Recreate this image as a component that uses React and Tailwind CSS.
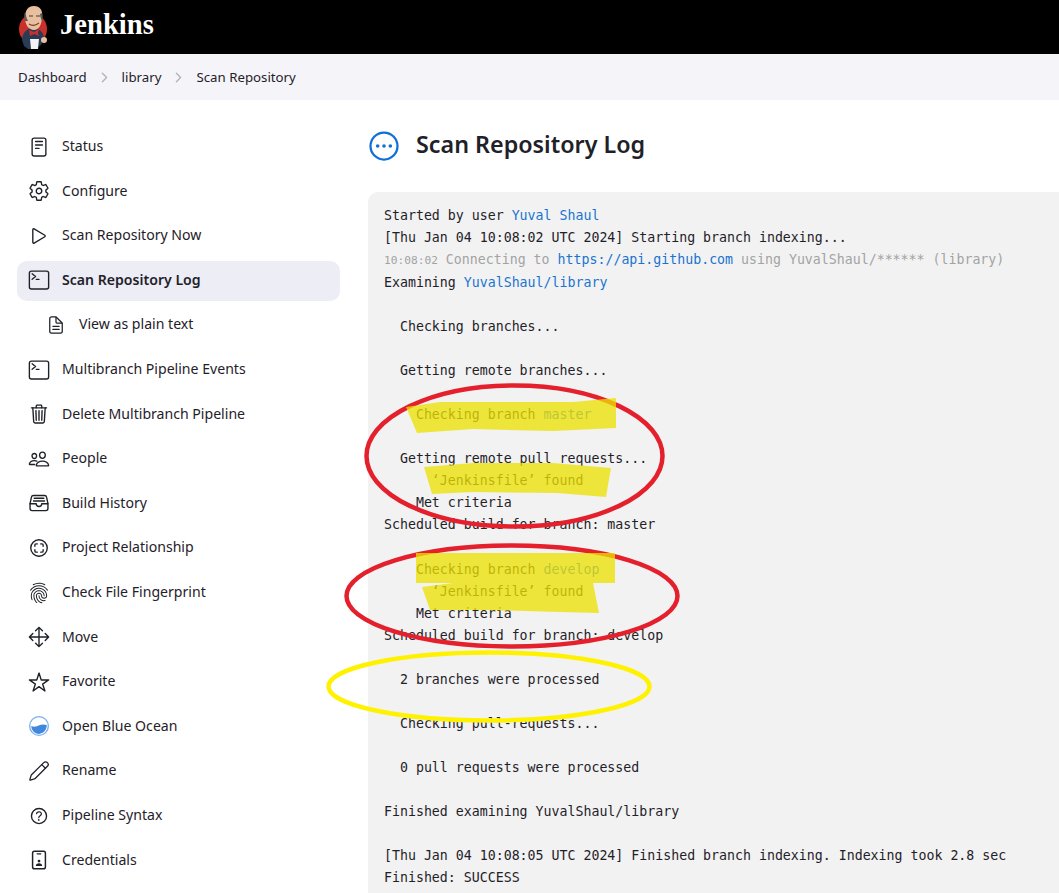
import React from 'react';
import {
  IoReaderOutline,
  IoSettingsOutline,
  IoPlayOutline,
  IoTerminalOutline,
  IoDocumentTextOutline,
  IoTrashOutline,
  IoPeopleOutline,
  IoFileTrayFullOutline,
  IoScanCircleOutline,
  IoFingerPrintOutline,
  IoMoveOutline,
  IoStarOutline,
  IoHelpCircleOutline,
  IoEllipsisHorizontalCircleOutline,
  IoChevronForward,
} from 'react-icons/io5';
import { Pencil } from 'lucide-react';

function JenkinsLogo() {
  return (
    <svg width="32" height="46" viewBox="0 0 32 46">
      <ellipse cx="15" cy="25" rx="14" ry="15" fill="#c9302c" />
      <path d="M4 36c0-7 5-12 11-12s11 4 11 11l-3 6-6 4h-7l-4-3z" fill="#2a3b55" />
      <path d="M7 14c0-8 3-12 9-12s9 4 8 11c0 7-3 13-8 13s-9-5-9-12z" fill="#e8c0a0" />
      <path d="M7 17c-1-4-1-6 0-9 1 2 1 6 3 9zM24 9c1 3 1 5 0 8-1-2-2-5-2-7z" fill="#5a5a5a" />
      <path d="M11 20c3 2 6 2 10-1" stroke="#7a3b2a" strokeWidth="1.2" fill="none" />
      <path d="M11 12h4M18 12h4" stroke="#3a3a3a" strokeWidth="1.2" />
      <path d="M11 26l5 2 5-3-1 4 1 3-5-2-4 2z" fill="#c9302c" />
      <path d="M12 35h9l-1 10h-7z" fill="#f4f4f4" />
      <circle cx="26" cy="36" r="3" fill="#e8c0a0" />
    </svg>
  );
}

function CredentialsIcon() {
  return (
    <svg width="24" height="24" viewBox="0 0 24 24" fill="none" stroke="currentColor">
      <rect x="5" y="2.5" width="14" height="19" rx="2" strokeWidth="1.6" />
      <path d="M10 5.2h4" strokeWidth="1.4" strokeLinecap="round" />
      <circle cx="12" cy="13.2" r="1.5" fill="currentColor" stroke="none" />
      <path d="M8.5 18.5c0-2 1.5-3 3.5-3s3.5 1 3.5 3z" fill="currentColor" stroke="none" />
    </svg>
  );
}

function BlueOceanIcon() {
  return (
    <svg width="24" height="24" viewBox="0 0 24 24">
      <circle cx="12" cy="12" r="10.2" fill="#fff" stroke="#7db1ea" strokeWidth="1.5" />
      <path d="M3.6 12c3 1.2 5 .8 8-.6 3-1.3 5.800-1.600 8.800-.4.300 5-3.500 9.600-8.400 9.600-4.800 0-8.400-4-8.400-8.600z" fill="#3f88dd" />
    </svg>
  );
}

const items = [
  { label: 'Status', icon: <IoReaderOutline size={24} /> },
  { label: 'Configure', icon: <IoSettingsOutline size={24} /> },
  { label: 'Scan Repository Now', icon: <IoPlayOutline size={24} /> },
  { label: 'Scan Repository Log', icon: <IoTerminalOutline size={24} />, active: true },
  { label: 'View as plain text', icon: <IoDocumentTextOutline size={20} />, sub: true },
  { label: 'Multibranch Pipeline Events', icon: <IoTerminalOutline size={24} /> },
  { label: 'Delete Multibranch Pipeline', icon: <IoTrashOutline size={24} /> },
  { label: 'People', icon: <IoPeopleOutline size={24} /> },
  { label: 'Build History', icon: <IoFileTrayFullOutline size={24} /> },
  { label: 'Project Relationship', icon: <IoScanCircleOutline size={24} /> },
  { label: 'Check File Fingerprint', icon: <IoFingerPrintOutline size={24} /> },
  { label: 'Move', icon: <IoMoveOutline size={24} /> },
  { label: 'Favorite', icon: <IoStarOutline size={24} /> },
  { label: 'Open Blue Ocean', icon: <BlueOceanIcon /> },
  { label: 'Rename', icon: <Pencil size={22} strokeWidth={1.4} /> },
  { label: 'Pipeline Syntax', icon: <IoHelpCircleOutline size={24} /> },
  { label: 'Credentials', icon: <CredentialsIcon /> },
];

const A = ({ children }) => <span className="text-[#1a73d1]">{children}</span>;

function Sidebar() {
  return (
    <nav className="w-[323px] shrink-0 mt-[1.5px] flex flex-col gap-[4.62px]">
      {items.map((item) => (
        <div
          key={item.label}
          className={`h-[40px] shrink-0 flex items-center rounded-[10px] text-[14.1px] text-[#1f2129] ${
            item.active ? 'bg-[#ecedf5] font-semibold' : ''
          } ${item.sub ? 'pl-[29px]' : 'pl-[11px]'}`}
        >
          <span className={`flex justify-center shrink-0 pb-[2px] ${item.sub ? 'w-[20px] mr-[13px]' : 'w-[22px] mr-[12px]'}`}>{item.icon}</span>
          <span className="pb-[4px]">{item.label}</span>
        </div>
      ))}
    </nav>
  );
}

function LogOutput() {
  return (
    <pre className="bg-[#f2f2f2] rounded-tl-[10px] pt-[12.5px] pl-[16px] w-[720px] h-[720px] font-['DejaVu_Sans_Mono',monospace] text-[13.25px] leading-[22.07px] text-[#1f2129]">
      {'Started by user '}<A>Yuval Shaul</A>{'\n'}
      {'[Thu Jan 04 10:08:02 UTC 2024] Starting branch indexing...\n'}
      <span className="text-[#a3a3a3]"><span className="text-[11.2px]">10:08:02</span>{' Connecting to '}</span><A>https://api.github.com</A><span className="text-[#a3a3a3]">{' using YuvalShaul/****** (library)'}</span>{'\n'}
      {'Examining '}<A>YuvalShaul/library</A>{'\n\n'}
      {'  Checking branches...\n\n'}
      {'  Getting remote branches...\n\n'}
      {'    Checking branch '}<A>master</A>{'\n\n'}
      {'  Getting remote pull requests...\n'}
      {"      ‘Jenkinsfile’ found\n"}
      {'    Met criteria\n'}
      {'Scheduled build for branch: master\n\n'}
      {'    Checking branch '}<A>develop</A>{'\n'}
      {"      ‘Jenkinsfile’ found\n"}
      {'    Met criteria\n'}
      {'Scheduled build for branch: develop\n\n'}
      {'  2 branches were processed\n\n'}
      {'  Checking pull-requests...\n\n'}
      {'  0 pull requests were processed\n\n'}
      {'Finished examining YuvalShaul/library\n\n'}
      {'[Thu Jan 04 10:08:05 UTC 2024] Finished branch indexing. Indexing took 2.8 sec\n'}
      {'Finished: SUCCESS'}
    </pre>
  );
}

// hand drawn marks sitting on top of the screenshot
function Annotations() {
  return (
    <svg className="absolute left-0 top-0 pointer-events-none" width="1059" height="893" fill="none">
      <ellipse cx="514.5" cy="456" rx="148" ry="70.500" stroke="#e3202c" strokeWidth="4.500" />
      <ellipse cx="512" cy="596" rx="165.500" ry="50.500" stroke="#e3202c" strokeWidth="4.500" />
      <ellipse cx="489" cy="686.500" rx="160.500" ry="34" stroke="#fff200" strokeWidth="4.500" />
      <g fill="#ede100" fillOpacity="0.76">
        <polygon points="406,407 440,402 573,402 616,398 616,428 553,431 473,429 417,433" />
        <polygon points="424,467 473,463 553,463 611,468 606,497 557,493 473,492 432,494" />
        <polygon points="416,553 615,553 615,583 416,583" />
        <polygon points="422,587 453,583 593,583 599,613 560,612 487,610 430,610" />
      </g>
    </svg>
  );
}

export default function App() {
  return (
    <div className="relative w-[1059px] h-[893px] overflow-hidden bg-white font-['Noto_Sans',sans-serif]">
      <header className="h-[54px] bg-black flex items-center pl-[18px]">
        <JenkinsLogo />
        <span className="ml-[10px] pb-[4px] font-['Liberation_Serif',serif] font-bold text-[28.6px] text-white">Jenkins</span>
      </header>
      <div className="h-[46px] bg-[#f5f5f9] flex items-center pl-[18px] pt-[1px] text-[13.25px] text-[#1f2129]">
        <span>Dashboard</span>
        <IoChevronForward size={15} className="mx-[10px] text-[#b4b4b8]" />
        <span>library</span>
        <IoChevronForward size={15} className="mx-[10px] text-[#b4b4b8]" />
        <span>Scan Repository</span>
      </div>
      <div className="flex pl-[17px] pt-[26px]">
        <Sidebar />
        <main className="ml-[28px]">
          <div className="flex items-center h-[40px] -ml-[2px]">
            <IoEllipsisHorizontalCircleOutline size={36} className="text-[#0f6fd6]" />
            <h1 className="ml-[14px] pb-[4px] text-[23.3px] font-semibold text-[#1f2129]">Scan Repository Log</h1>
          </div>
          <div className="mt-[26px]">
            <LogOutput />
          </div>
        </main>
      </div>
      <Annotations />
    </div>
  );
}
